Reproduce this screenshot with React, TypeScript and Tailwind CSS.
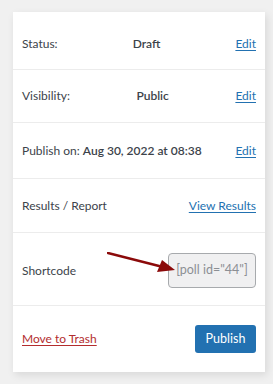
const Row = ({ className, children }: { className: string; children: React.ReactNode }) => (
  <div className={`flex items-center justify-between px-[9px] border-b border-[#ececec] ${className}`}>{children}</div>
)

const Link = ({ children }: { children: React.ReactNode }) => (
  <a href="#" className="text-[#2271b1] underline underline-offset-2">{children}</a>
)

export default function App() {
  return (
    <div className="w-[273px] h-[384px] bg-[#f0f0f0] pt-[12px] pl-[13px] font-['Lato',sans-serif] text-[12px] text-[#3c434a]">
      <div className="w-[252px] h-[360px] bg-white shadow-[2px_3px_8px_rgba(0,0,0,0.10)] flex flex-col">
        <Row className="h-[58px] pt-[6px]">
          <span>Status:</span>
          <span className="font-semibold">Draft</span>
          <Link>Edit</Link>
        </Row>
        <Row className="h-[53px]">
          <span>Visibility:</span>
          <span className="font-semibold">Public</span>
          <Link>Edit</Link>
        </Row>
        <Row className="h-[56px]">
          <span>
            Publish on: <span className="font-semibold">Aug 30, 2022 at 08:38</span>
          </span>
          <Link>Edit</Link>
        </Row>
        <Row className="h-[54px]">
          <span>Results / Report</span>
          <Link>View Results</Link>
        </Row>
        <Row className="h-[73px] pt-[3px] relative">
          <span>Shortcode</span>
          <svg className="absolute left-[94px] top-[19px]" width="70" height="22" viewBox="0 0 70 22">
            <line x1="1" y1="1" x2="56" y2="15" stroke="#8b0a0a" strokeWidth="2.5" strokeLinecap="round" />
            <polygon points="68,18 50,20 55,8" fill="#8b0a0a" />
          </svg>
          <div className="w-[88px] h-[35px] bg-[#f0f0f1] border border-[#a7aaad] rounded-[4px] flex items-center justify-center text-[#8c8f94] text-[12.5px]">
            [poll id="44"]
          </div>
        </Row>
        <div className="flex-1 flex items-center justify-between px-[9px]">
          <a href="#" className="text-[#b32d2e] underline underline-offset-2">Move to Trash</a>
          <button className="w-[61px] h-[28px] bg-[#2271b1] text-white rounded-[3px] text-[12.5px]">Publish</button>
        </div>
      </div>
    </div>
  )
}
